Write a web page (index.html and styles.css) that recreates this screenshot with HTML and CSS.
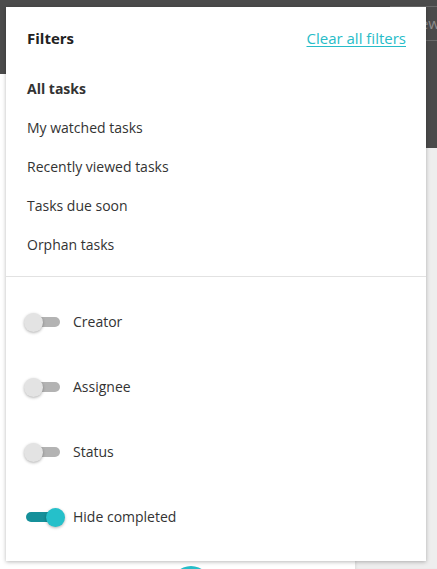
FILE: index.html
```html
<!DOCTYPE html>
<html>
<head>
<meta charset="utf-8">
<link rel="stylesheet" href="styles.css">
</head>
<body>
<div class="app">
  <div class="topbar">
    <div class="view-btn">View</div>
  </div>
  <div class="main">
    <div class="content">
      <div class="fab"></div>
    </div>
    <div class="side">
      <div class="side-top"></div>
    </div>
  </div>

  <div class="popup">
    <div class="popup-header">
      <span class="title">Filters</span>
      <a class="clear" href="#">Clear all filters</a>
    </div>
    <ul class="views">
      <li class="active">All tasks</li>
      <li>My watched tasks</li>
      <li>Recently viewed tasks</li>
      <li>Tasks due soon</li>
      <li>Orphan tasks</li>
    </ul>
    <div class="divider"></div>
    <div class="toggles">
      <div class="toggle-row"><span class="switch"><span class="track"></span><span class="knob"></span></span><span class="label">Creator</span></div>
      <div class="toggle-row"><span class="switch"><span class="track"></span><span class="knob"></span></span><span class="label">Assignee</span></div>
      <div class="toggle-row"><span class="switch"><span class="track"></span><span class="knob"></span></span><span class="label">Status</span></div>
      <div class="toggle-row"><span class="switch on"><span class="track"></span><span class="knob"></span></span><span class="label">Hide completed</span></div>
    </div>
  </div>
</div>
</body>
</html>
```

FILE: styles.css
```css
* { box-sizing: border-box; }
html, body { margin: 0; padding: 0; }
body {
  width: 437px;
  height: 569px;
  overflow: hidden;
  background: #ffffff;
  font-family: "Open Sans", "DejaVu Sans", sans-serif;
  color: #333;
}
.app {
  position: relative;
  width: 437px;
  height: 569px;
  overflow: hidden;
  display: flex;
  flex-direction: column;
}
.topbar {
  height: 74px;
  background: #4b4b4b;
  display: flex;
  justify-content: flex-end;
  align-items: flex-start;
  overflow: hidden;
}
.view-btn {
  margin-top: 6px;
  margin-right: -17px;
  height: 35px;
  padding: 0 14px 0 16px;
  border-top: 1px solid #6a6a6a;
  border-bottom: 1px solid #6a6a6a;
  border-left: 1px solid #6a6a6a;
  color: #8e8e8e;
  font-size: 15px;
  line-height: 33px;
}
.main {
  flex: 1;
  display: flex;
  min-height: 0;
}
.content {
  flex: 1;
  background: #fff;
  position: relative;
  overflow: hidden;
}
.fab {
  position: absolute;
  left: 171px;
  top: 492px;
  width: 40px;
  height: 40px;
  border-radius: 50%;
  background: #26bdc8;
}
.side {
  width: 82px;
  background: #eeeeee;
  box-shadow: inset 2px 0 3px -1px rgba(0,0,0,0.08);
}
.side-top {
  height: 74px;
  background: #4b4b4b;
}
.popup {
  position: absolute;
  left: 6px;
  top: 7px;
  width: 420px;
  height: 554px;
  background: #fff;
  box-shadow: 0 1px 4px rgba(0,0,0,0.28);
  display: flex;
  flex-direction: column;
}
.popup-header {
  height: 62px;
  display: flex;
  align-items: center;
  justify-content: space-between;
  padding: 0 20px 0 21px;
}
.title {
  font-weight: 700;
  font-size: 15px;
  color: #222;
}
.clear {
  color: #27bcc8;
  font-size: 15px;
  text-decoration: underline;
  text-underline-offset: 2px;
}
.views {
  list-style: none;
  margin: 0;
  padding: 0 0 12px 0;
}
.views li {
  height: 39px;
  line-height: 39px;
  padding-left: 21px;
  font-size: 14px;
  color: #333;
}
.views li.active {
  font-weight: 700;
}
.divider {
  height: 1px;
  background: #e2e2e2;
}
.toggles {
  padding-top: 12px;
}
.toggle-row {
  height: 65px;
  display: flex;
  align-items: center;
  padding-left: 20px;
}
.switch {
  position: relative;
  width: 34px;
  height: 18px;
  margin-right: 13px;
  display: inline-block;
}
.track {
  position: absolute;
  left: 2px;
  right: 0;
  top: 4px;
  height: 10px;
  border-radius: 5px;
  background: #b3b3b3;
}
.knob {
  position: absolute;
  left: -2px;
  top: 0;
  width: 19px;
  height: 19px;
  border-radius: 50%;
  background: #e3e3e3;
  box-shadow: 0 1px 3px rgba(0,0,0,0.3);
}
.switch.on .track {
  left: 0;
  right: 0;
  background: #15909a;
}
.switch.on .knob {
  left: 20px;
  background: #25c0ca;
}
.label {
  font-size: 14px;
  color: #333;
}
```
